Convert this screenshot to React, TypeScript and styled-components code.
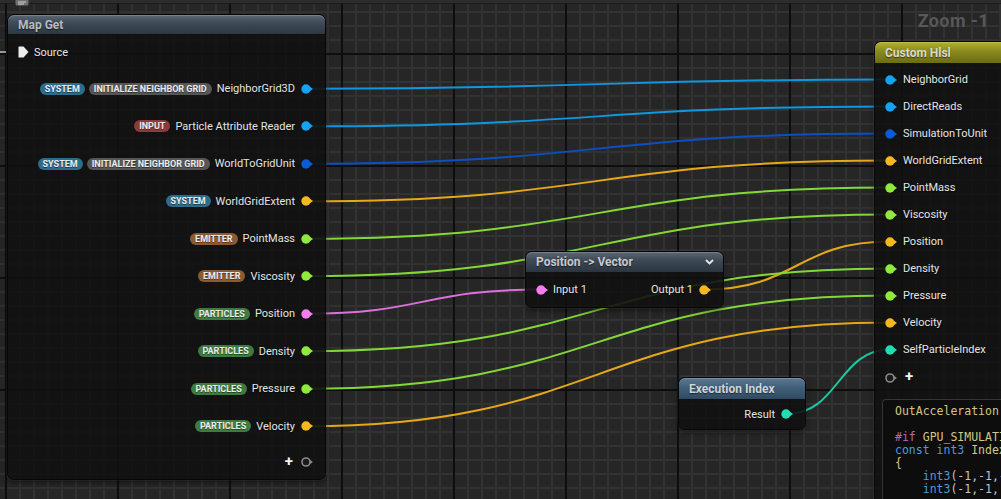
import styled, { createGlobalStyle } from "styled-components";

const GlobalStyle = createGlobalStyle`
  html, body {
    margin: 0;
    padding: 0;
    background: #262626;
    overflow: hidden;
  }
`;

type PinKind = "blue" | "navy" | "gold" | "lime" | "pink" | "teal";
type TagKind = "system" | "grid" | "input" | "emitter" | "particles";
type HeaderTone = "map" | "convert" | "exec" | "custom";
type TokKind = "id" | "kw" | "pp" | "pn";

const pinColor: Record<PinKind, string> = {
  blue: "#12a3f2",
  navy: "#0b5ad8",
  gold: "#f5b91f",
  lime: "#90ea3c",
  pink: "#f27ef0",
  teal: "#1fdfb2",
};

const wireColor: Record<PinKind, string> = {
  blue: "#0e98e2",
  navy: "#0c4fc4",
  gold: "#e6a818",
  lime: "#84d836",
  pink: "#de70dc",
  teal: "#1cc9a0",
};

const tagText: Record<TagKind, string> = {
  system: "SYSTEM",
  grid: "INITIALIZE NEIGHBOR GRID",
  input: "INPUT",
  emitter: "EMITTER",
  particles: "PARTICLES",
};

const tagColor: Record<TagKind, string> = {
  system: "#2e6c8c",
  grid: "#565656",
  input: "#8c3a3a",
  emitter: "#8a5a34",
  particles: "#3e7b40",
};

const headerBg: Record<HeaderTone, string> = {
  map: "linear-gradient(180deg, #5b6874 0%, #3f4b57 40%, #2d3843 100%)",
  convert: "linear-gradient(180deg, #5a6673 0%, #3e4a56 40%, #2b3540 100%)",
  exec: "linear-gradient(180deg, #5b7791 0%, #41607c 45%, #2f4a62 100%)",
  custom: "linear-gradient(180deg, #b2b232 0%, #8d8d1f 40%, #6c6c12 100%)",
};

const headerInk: Record<HeaderTone, string> = {
  map: "#b6bcc2",
  convert: "#c6cacf",
  exec: "#ccd4dc",
  custom: "#dcdcc8",
};

const tokColor: Record<TokKind, string> = {
  id: "#d3c58a",
  kw: "#4f9bd6",
  pp: "#b46cb6",
  pn: "#c4c4c4",
};

// layout numbers shared by nodes and wires
const MAP = { left: 8, top: 15, width: 317, head: 19, source: 36, row: 37.5, plus: 34 };
const HLSL = { left: 875, top: 42, width: 210, head: 21, pad: 3, row: 27, plus: 29 };
const CONV = { left: 526, top: 252, width: 197, head: 20, row: 35 };
const EXEC = { left: 679, top: 378, width: 126, head: 21, row: 30 };

const Canvas = styled.div`
  position: relative;
  width: 1001px;
  height: 499px;
  overflow: hidden;
  font-family: Roboto, "Noto Sans", sans-serif;
  background-color: #262626;
  background-image:
    linear-gradient(to right, #0e0e0e 0 2px, transparent 2px),
    linear-gradient(to bottom, #0e0e0e 0 2px, transparent 2px),
    linear-gradient(to right, #323232 0 2px, transparent 2px),
    linear-gradient(to bottom, #323232 0 2px, transparent 2px);
  background-size: 112px 112px, 112px 112px, 14px 14px, 14px 14px;
  background-position: 5px 0, 0 53px, 5px 0, 0 11px;
`;

const TopEdge = styled.div`
  position: absolute;
  left: 0;
  right: 0;
  top: 0;
  height: 3px;
  background: #2c2c2c;
  border-bottom: 1px solid #1b1b1b;
`;

const CommentGlyph = styled.svg`
  position: absolute;
  left: 15px;
  top: -3px;
`;

const ZoomLabel = styled.div`
  position: absolute;
  top: 10px;
  right: 12px;
  font-size: 18px;
  font-weight: 700;
  color: #585858;
  letter-spacing: 0.4px;
`;

const Wires = styled.svg`
  position: absolute;
  left: 0;
  top: 0;
`;

const Node = styled.div<{ $left: number; $top: number; $width: number }>`
  position: absolute;
  left: ${(p) => p.$left}px;
  top: ${(p) => p.$top}px;
  width: ${(p) => p.$width}px;
  display: flex;
  flex-direction: column;
  background: rgba(17, 17, 17, 0.9);
  border-radius: 6px;
  box-shadow: 0 0 0 1px #060606, 0 0 0 2px rgba(255, 255, 255, 0.04),
    0 3px 6px rgba(0, 0, 0, 0.55);
`;

const Header = styled.div<{ $tone: HeaderTone; $h: number }>`
  height: ${(p) => p.$h}px;
  display: flex;
  align-items: center;
  justify-content: space-between;
  padding: 0 9px 0 10px;
  border-radius: 6px 6px 0 0;
  background: ${(p) => headerBg[p.$tone]};
  box-shadow: inset 0 1px 0 rgba(255, 255, 255, 0.18);
  color: ${(p) => headerInk[p.$tone]};
  font-size: 12px;
  font-weight: 700;
  text-shadow: 0 1px 1px rgba(0, 0, 0, 0.55);
  white-space: nowrap;
`;

const Body = styled.div<{ $padTop?: number }>`
  display: flex;
  flex-direction: column;
  padding-top: ${(p) => p.$padTop ?? 0}px;
`;

const OutRow = styled.div<{ $h: number }>`
  height: ${(p) => p.$h}px;
  display: flex;
  align-items: center;
  justify-content: flex-end;
  padding-right: 11px;
`;

const InRow = styled.div<{ $h: number }>`
  height: ${(p) => p.$h}px;
  display: flex;
  align-items: center;
  padding-left: 10px;
`;

const SplitRow = styled.div<{ $h: number }>`
  height: ${(p) => p.$h}px;
  display: flex;
  align-items: center;
  justify-content: space-between;
  padding: 0 11px 0 10px;
`;

const PinGroup = styled.div<{ $gap: number }>`
  display: flex;
  align-items: center;
  gap: ${(p) => p.$gap}px;
`;

const Label = styled.span`
  font-size: 11px;
  color: #e6e6e6;
  white-space: nowrap;
  text-shadow: 0 1px 1px rgba(0, 0, 0, 0.6);
`;

const TagList = styled.div`
  display: flex;
  gap: 4px;
  margin-right: 5px;
`;

const Tag = styled.span<{ $kind: TagKind }>`
  height: 12px;
  line-height: 12px;
  padding: 0 5px;
  border-radius: 6px;
  background: ${(p) => tagColor[p.$kind]};
  color: #ececec;
  font-size: 9px;
  font-weight: 700;
  white-space: nowrap;
  text-shadow: 0 1px 0 rgba(0, 0, 0, 0.45);
`;

const PlusSign = styled.span`
  color: #f2f2f2;
  font-size: 15px;
  font-weight: 700;
  line-height: 1;
  margin-top: -2px;
`;

const Chevron = styled.svg`
  flex: none;
`;

const CodeBox = styled.div`
  margin: 7px 0 0 7px;
  padding: 5px 0 10px 12px;
  border: 1px solid #363636;
  border-right: none;
  border-radius: 4px 0 0 4px;
  background: #0d0d0d;
  font-family: "DejaVu Sans Mono", "Liberation Mono", monospace;
  font-size: 11.5px;
  line-height: 13px;
  white-space: pre;
  overflow: hidden;
`;

const CodeLine = styled.div`
  height: 13px;
`;

const Tok = styled.span<{ $kind: TokKind }>`
  color: ${(p) => tokColor[p.$kind]};
`;

const Pin = ({ kind }: { kind: PinKind }) => (
  <svg width="13" height="10" viewBox="0 0 13 10">
    <circle cx="5" cy="5" r="4.7" fill={pinColor[kind]} />
    <path d="M8.6 2.4 L12 5 L8.6 7.6 Z" fill={pinColor[kind]} />
  </svg>
);

const EmptyPin = () => (
  <svg width="13" height="10" viewBox="0 0 13 10">
    <circle cx="5" cy="5" r="4" fill="#1a1a1a" stroke="#8a8a8a" strokeWidth="1.6" />
    <path d="M9 3 L12 5 L9 7 Z" fill="#8a8a8a" />
  </svg>
);

const ExecPin = () => (
  <svg width="11" height="12" viewBox="0 0 11 12">
    <path d="M1 0.5 H5.5 L10.5 6 L5.5 11.5 H1 Q0.5 11.5 0.5 11 V1 Q0.5 0.5 1 0.5 Z" fill="#ececec" />
  </svg>
);

const mapRows: { tags: TagKind[]; label: string; pin: PinKind }[] = [
  { tags: ["system", "grid"], label: "NeighborGrid3D", pin: "blue" },
  { tags: ["input"], label: "Particle Attribute Reader", pin: "blue" },
  { tags: ["system", "grid"], label: "WorldToGridUnit", pin: "navy" },
  { tags: ["system"], label: "WorldGridExtent", pin: "gold" },
  { tags: ["emitter"], label: "PointMass", pin: "lime" },
  { tags: ["emitter"], label: "Viscosity", pin: "lime" },
  { tags: ["particles"], label: "Position", pin: "pink" },
  { tags: ["particles"], label: "Density", pin: "lime" },
  { tags: ["particles"], label: "Pressure", pin: "lime" },
  { tags: ["particles"], label: "Velocity", pin: "gold" },
];

const hlslRows: { label: string; pin: PinKind }[] = [
  { label: "NeighborGrid", pin: "blue" },
  { label: "DirectReads", pin: "blue" },
  { label: "SimulationToUnit", pin: "navy" },
  { label: "WorldGridExtent", pin: "gold" },
  { label: "PointMass", pin: "lime" },
  { label: "Viscosity", pin: "lime" },
  { label: "Position", pin: "gold" },
  { label: "Density", pin: "lime" },
  { label: "Pressure", pin: "lime" },
  { label: "Velocity", pin: "gold" },
  { label: "SelfParticleIndex", pin: "teal" },
];

const code: [TokKind, string][][] = [
  [["id", "OutAcceleration"], ["pn", " = "], ["kw", "float3"], ["pn", "(0, 0, 0);"]],
  [],
  [["pp", "#if"], ["id", " GPU_SIMULATION"]],
  [["kw", "const int3"], ["id", " IndexOffsets"], ["pn", "[27] ="]],
  [["id", "{"]],
  [["pn", "    "], ["kw", "int3"], ["pn", "(-1,-1,-1),"]],
  [["pn", "    "], ["kw", "int3"], ["pn", "(-1,-1, 0),"]],
];

// pin centres
const mapOut = (i: number) => ({ x: MAP.left + MAP.width - 19, y: MAP.top + MAP.head + MAP.source + MAP.row * i + MAP.row / 2 });
const hlslIn = (i: number) => ({ x: HLSL.left + 15, y: HLSL.top + HLSL.head + HLSL.pad + HLSL.row * i + HLSL.row / 2 });
const convIn = { x: CONV.left + 15, y: CONV.top + CONV.head + CONV.row / 2 };
const convOut = { x: CONV.left + CONV.width - 19, y: CONV.top + CONV.head + CONV.row / 2 };
const execOut = { x: EXEC.left + EXEC.width - 18, y: EXEC.top + EXEC.head + EXEC.row / 2 };

type Pt = { x: number; y: number };
const links: [Pt, Pt, PinKind][] = [
  [mapOut(0), hlslIn(0), "blue"],
  [mapOut(1), hlslIn(1), "blue"],
  [mapOut(2), hlslIn(2), "navy"],
  [mapOut(3), hlslIn(3), "gold"],
  [mapOut(4), hlslIn(4), "lime"],
  [mapOut(5), hlslIn(5), "lime"],
  [mapOut(6), convIn, "pink"],
  [convOut, hlslIn(6), "gold"],
  [mapOut(7), hlslIn(7), "lime"],
  [mapOut(8), hlslIn(8), "lime"],
  [mapOut(9), hlslIn(9), "gold"],
  [execOut, hlslIn(10), "teal"],
];

const spline = (a: Pt, b: Pt) => {
  const d = Math.max(Math.abs(b.x - a.x) * 0.5, 30);
  return `M${a.x} ${a.y} C${a.x + d} ${a.y} ${b.x - d} ${b.y} ${b.x} ${b.y}`;
};

export default function App() {
  return (
    <Canvas>
      <GlobalStyle />
      <TopEdge />
      <CommentGlyph width="14" height="10" viewBox="0 0 14 10">
        <rect x="0.5" y="0.5" width="13" height="8" rx="1.5" fill="#6f6f6f" />
        <path d="M3 5 H11 M3 7 H9" stroke="#cfcfcf" strokeWidth="1" />
      </CommentGlyph>
      <ZoomLabel>Zoom -1</ZoomLabel>

      <Wires width="1001" height="499" viewBox="0 0 1001 499">
        <path d="M0 52 H6" stroke="#9c9c9c" strokeWidth="2" />
        {links.map(([a, b, kind], i) => (
          <path key={i} d={spline(a, b)} fill="none" stroke={wireColor[kind]} strokeWidth="2" />
        ))}
      </Wires>

      <Node $left={MAP.left} $top={MAP.top} $width={MAP.width}>
        <Header $tone="map" $h={MAP.head}>Map Get</Header>
        <Body>
          <InRow $h={MAP.source}>
            <PinGroup $gap={5}>
              <ExecPin />
              <Label>Source</Label>
            </PinGroup>
          </InRow>
          {mapRows.map((r) => (
            <OutRow key={r.label} $h={MAP.row}>
              <TagList>
                {r.tags.map((t) => (
                  <Tag key={t} $kind={t}>{tagText[t]}</Tag>
                ))}
              </TagList>
              <PinGroup $gap={6}>
                <Label>{r.label}</Label>
                <Pin kind={r.pin} />
              </PinGroup>
            </OutRow>
          ))}
          <OutRow $h={MAP.plus}>
            <PinGroup $gap={8}>
              <PlusSign>+</PlusSign>
              <EmptyPin />
            </PinGroup>
          </OutRow>
        </Body>
      </Node>

      <Node $left={CONV.left} $top={CONV.top} $width={CONV.width}>
        <Header $tone="convert" $h={CONV.head}>
          Position -&gt; Vector
          <Chevron width="9" height="6" viewBox="0 0 9 6">
            <path d="M1 1 L4.5 4.5 L8 1" fill="none" stroke="#e8e8e8" strokeWidth="1.8" />
          </Chevron>
        </Header>
        <Body>
          <SplitRow $h={CONV.row}>
            <PinGroup $gap={4}>
              <Pin kind="pink" />
              <Label>Input 1</Label>
            </PinGroup>
            <PinGroup $gap={6}>
              <Label>Output 1</Label>
              <Pin kind="gold" />
            </PinGroup>
          </SplitRow>
        </Body>
      </Node>

      <Node $left={EXEC.left} $top={EXEC.top} $width={EXEC.width}>
        <Header $tone="exec" $h={EXEC.head}>Execution Index</Header>
        <Body>
          <OutRow $h={EXEC.row}>
            <PinGroup $gap={6}>
              <Label>Result</Label>
              <Pin kind="teal" />
            </PinGroup>
          </OutRow>
        </Body>
      </Node>

      <Node $left={HLSL.left} $top={HLSL.top} $width={HLSL.width}>
        <Header $tone="custom" $h={HLSL.head}>Custom Hlsl</Header>
        <Body $padTop={HLSL.pad}>
          {hlslRows.map((r) => (
            <InRow key={r.label} $h={HLSL.row}>
              <PinGroup $gap={5}>
                <Pin kind={r.pin} />
                <Label>{r.label}</Label>
              </PinGroup>
            </InRow>
          ))}
          <InRow $h={HLSL.plus}>
            <PinGroup $gap={7}>
              <EmptyPin />
              <PlusSign>+</PlusSign>
            </PinGroup>
          </InRow>
          <CodeBox>
            {code.map((line, i) => (
              <CodeLine key={i}>
                {line.map(([k, s], j) => (
                  <Tok key={j} $kind={k}>{s}</Tok>
                ))}
              </CodeLine>
            ))}
          </CodeBox>
        </Body>
      </Node>
    </Canvas>
  );
}
